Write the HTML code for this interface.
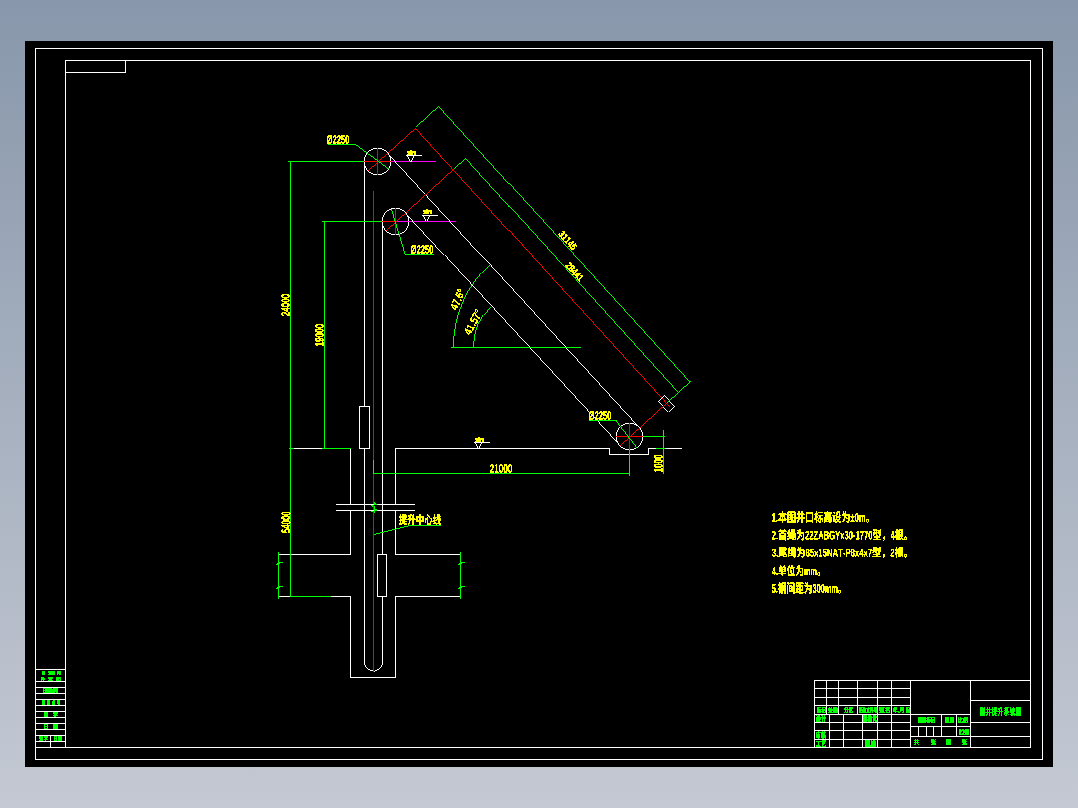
<!DOCTYPE html>
<html><head><meta charset="utf-8"><style>
html,body{margin:0;padding:0;width:1078px;height:808px;overflow:hidden;background:linear-gradient(#8897ab,#c4c9d3);font-family:"Liberation Sans",sans-serif;}
svg{position:absolute;left:0;top:0;display:block}
</style></head><body>
<svg width="1078" height="808" viewBox="0 0 1078 808" shape-rendering="crispEdges">
<rect x="25" y="41" width="1028" height="726" fill="#000"/>
<rect x="35" y="48" width="1008" height="1" fill="#ffffff"/>
<rect x="35" y="759" width="1008" height="1" fill="#ffffff"/>
<rect x="35" y="48" width="1" height="712" fill="#ffffff"/>
<rect x="1042" y="48" width="1" height="712" fill="#ffffff"/>
<rect x="65" y="60" width="966" height="1" fill="#ffffff"/>
<rect x="65" y="747" width="966" height="1" fill="#ffffff"/>
<rect x="65" y="60" width="1" height="688" fill="#ffffff"/>
<rect x="1030" y="60" width="1" height="688" fill="#ffffff"/>
<rect x="65" y="60" width="61" height="1" fill="#ffffff"/>
<rect x="65" y="72" width="61" height="1" fill="#ffffff"/>
<rect x="65" y="60" width="1" height="13" fill="#ffffff"/>
<rect x="125" y="60" width="1" height="13" fill="#ffffff"/>
<rect x="35" y="747" width="31" height="1" fill="#ffffff"/>
<rect x="35" y="669" width="31" height="1" fill="#ffffff"/>
<rect x="35" y="681" width="31" height="1" fill="#ffffff"/>
<rect x="35" y="687" width="31" height="1" fill="#ffffff"/>
<rect x="35" y="693" width="31" height="1" fill="#ffffff"/>
<rect x="35" y="699" width="31" height="1" fill="#ffffff"/>
<rect x="35" y="705" width="31" height="1" fill="#ffffff"/>
<rect x="35" y="711" width="31" height="1" fill="#ffffff"/>
<rect x="35" y="717" width="31" height="1" fill="#ffffff"/>
<rect x="35" y="723" width="31" height="1" fill="#ffffff"/>
<rect x="35" y="729" width="31" height="1" fill="#ffffff"/>
<rect x="35" y="735" width="31" height="1" fill="#ffffff"/>
<rect x="35" y="741" width="31" height="1" fill="#ffffff"/>
<rect x="50" y="735" width="1" height="13" fill="#ffffff"/>
<rect x="814" y="680" width="217" height="1" fill="#ffffff"/>
<rect x="814" y="680" width="1" height="68" fill="#ffffff"/>
<rect x="814" y="688" width="97" height="1" fill="#ffffff"/>
<rect x="814" y="697" width="97" height="1" fill="#ffffff"/>
<rect x="814" y="705" width="97" height="1" fill="#ffffff"/>
<rect x="814" y="714" width="97" height="1" fill="#ffffff"/>
<rect x="814" y="722" width="97" height="1" fill="#ffffff"/>
<rect x="814" y="730" width="97" height="1" fill="#ffffff"/>
<rect x="814" y="739" width="97" height="1" fill="#ffffff"/>
<rect x="826" y="680" width="1" height="35" fill="#ffffff"/>
<rect x="838" y="680" width="1" height="35" fill="#ffffff"/>
<rect x="857" y="680" width="1" height="35" fill="#ffffff"/>
<rect x="877" y="680" width="1" height="35" fill="#ffffff"/>
<rect x="891" y="680" width="1" height="35" fill="#ffffff"/>
<rect x="829" y="714" width="1" height="34" fill="#ffffff"/>
<rect x="843" y="714" width="1" height="34" fill="#ffffff"/>
<rect x="862" y="714" width="1" height="34" fill="#ffffff"/>
<rect x="877" y="714" width="1" height="34" fill="#ffffff"/>
<rect x="891" y="714" width="1" height="34" fill="#ffffff"/>
<rect x="910" y="680" width="1" height="68" fill="#ffffff"/>
<rect x="970" y="680" width="1" height="68" fill="#ffffff"/>
<rect x="910" y="714" width="61" height="1" fill="#ffffff"/>
<rect x="910" y="726" width="61" height="1" fill="#ffffff"/>
<rect x="910" y="736" width="61" height="1" fill="#ffffff"/>
<rect x="941" y="714" width="1" height="23" fill="#ffffff"/>
<rect x="956" y="714" width="1" height="23" fill="#ffffff"/>
<rect x="918" y="726" width="1" height="11" fill="#ffffff"/>
<rect x="926" y="726" width="1" height="11" fill="#ffffff"/>
<rect x="933" y="726" width="1" height="11" fill="#ffffff"/>
<rect x="970" y="700" width="61" height="1" fill="#ffffff"/>
<rect x="970" y="722" width="61" height="1" fill="#ffffff"/>
<rect x="970" y="736" width="61" height="1" fill="#ffffff"/>
<rect x="364" y="161" width="1" height="502" fill="#ffffff"/>
<rect x="382" y="221" width="1" height="442" fill="#ffffff"/>
<path d="M364.5,662 A9,9 0 0 0 382.5,662" fill="none" stroke="#ffffff" stroke-width="0.999"/>
<rect x="373" y="191" width="1" height="481" fill="#ff0000"/>
<rect x="359" y="406" width="11" height="43" fill="#000"/>
<rect x="359" y="406" width="11" height="1" fill="#ffffff"/>
<rect x="359" y="448" width="11" height="1" fill="#ffffff"/>
<rect x="359" y="406" width="1" height="43" fill="#ffffff"/>
<rect x="369" y="406" width="1" height="43" fill="#ffffff"/>
<rect x="290" y="448" width="61" height="1" fill="#ffffff"/>
<rect x="350" y="448" width="1" height="57" fill="#ffffff"/>
<rect x="395" y="448" width="215" height="1" fill="#ffffff"/>
<rect x="395" y="448" width="1" height="57" fill="#ffffff"/>
<rect x="322" y="448" width="29" height="1" fill="#00ff00"/>
<rect x="289" y="448" width="5" height="1" fill="#00ff00"/>
<rect x="350" y="510" width="1" height="45" fill="#ffffff"/>
<rect x="350" y="596" width="1" height="82" fill="#ffffff"/>
<rect x="395" y="510" width="1" height="45" fill="#ffffff"/>
<rect x="395" y="596" width="1" height="82" fill="#ffffff"/>
<rect x="350" y="677" width="46" height="1" fill="#ffffff"/>
<rect x="336" y="504" width="79" height="1" fill="#ffffff"/>
<rect x="336" y="510" width="79" height="1" fill="#ffffff"/>
<rect x="609" y="448" width="1" height="7" fill="#ffffff"/>
<rect x="609" y="454" width="40" height="1" fill="#ffffff"/>
<rect x="648" y="448" width="1" height="7" fill="#ffffff"/>
<rect x="648" y="448" width="34" height="1" fill="#ffffff"/>
<rect x="656" y="448" width="9" height="1" fill="#00ff00"/>
<rect x="278" y="554" width="73" height="1" fill="#ffffff"/>
<rect x="278" y="596" width="13" height="1" fill="#ffffff"/>
<rect x="290" y="596" width="41" height="1" fill="#00ff00"/>
<rect x="331" y="596" width="20" height="1" fill="#ffffff"/>
<rect x="395" y="554" width="66" height="1" fill="#ffffff"/>
<rect x="395" y="596" width="66" height="1" fill="#ffffff"/>
<rect x="377" y="554" width="10" height="43" fill="#000"/>
<rect x="377" y="554" width="10" height="1" fill="#ffffff"/>
<rect x="377" y="596" width="10" height="1" fill="#ffffff"/>
<rect x="377" y="554" width="1" height="43" fill="#ffffff"/>
<rect x="386" y="554" width="1" height="43" fill="#ffffff"/>
<rect x="278" y="552" width="1" height="47" fill="#00ff00"/>
<polyline points="278.5,560.0 278.5,562.0 281.5,562.5 276.0,564.5" fill="none" stroke="#00ff00" stroke-width="1" shape-rendering="crispEdges"/>
<rect x="276" y="564" width="3" height="1" fill="#00ff00"/>
<polyline points="278.5,584.0 278.5,586.0 281.5,586.5 276.0,588.5" fill="none" stroke="#00ff00" stroke-width="1" shape-rendering="crispEdges"/>
<rect x="276" y="588" width="3" height="1" fill="#00ff00"/>
<rect x="460" y="552" width="1" height="47" fill="#00ff00"/>
<polyline points="460.5,560.0 460.5,562.0 463.5,562.5 458.0,564.5" fill="none" stroke="#00ff00" stroke-width="1" shape-rendering="crispEdges"/>
<rect x="458" y="564" width="3" height="1" fill="#00ff00"/>
<polyline points="460.5,584.0 460.5,586.0 463.5,586.5 458.0,588.5" fill="none" stroke="#00ff00" stroke-width="1" shape-rendering="crispEdges"/>
<rect x="458" y="588" width="3" height="1" fill="#00ff00"/>
<rect x="290" y="161" width="1" height="436" fill="#00ff00"/>
<rect x="288" y="161" width="77" height="1" fill="#00ff00"/>
<rect x="324" y="221" width="1" height="228" fill="#00ff00"/>
<rect x="322" y="221" width="61" height="1" fill="#00ff00"/>
<rect x="373" y="460" width="1" height="14" fill="#00ff00"/>
<rect x="373" y="473" width="257" height="1" fill="#00ff00"/>
<rect x="629" y="449" width="1" height="27" fill="#00ff00"/>
<rect x="663" y="430" width="1" height="44" fill="#00ff00"/>
<rect x="642" y="436" width="23" height="1" fill="#00ff00"/>
<rect x="374" y="502" width="1" height="1" fill="#00ff00"/>
<rect x="374" y="503" width="1" height="1" fill="#00ff00"/>
<rect x="375" y="503" width="1" height="1" fill="#00ff00"/>
<rect x="374" y="504" width="1" height="1" fill="#00ff00"/>
<rect x="375" y="504" width="1" height="1" fill="#00ff00"/>
<rect x="376" y="504" width="1" height="1" fill="#00ff00"/>
<rect x="371" y="505" width="1" height="1" fill="#00ff00"/>
<rect x="372" y="505" width="1" height="1" fill="#00ff00"/>
<rect x="372" y="506" width="1" height="1" fill="#00ff00"/>
<rect x="375" y="509" width="1" height="1" fill="#00ff00"/>
<rect x="376" y="509" width="1" height="1" fill="#00ff00"/>
<rect x="375" y="510" width="1" height="1" fill="#00ff00"/>
<rect x="376" y="510" width="1" height="1" fill="#00ff00"/>
<rect x="371" y="511" width="1" height="1" fill="#00ff00"/>
<rect x="372" y="511" width="1" height="1" fill="#00ff00"/>
<rect x="374" y="506" width="1" height="7" fill="#00ff00"/>
<polygon points="390.80,161.50 390.64,163.58 390.15,165.61 389.35,167.54 388.26,169.32 386.90,170.90 385.32,172.26 383.54,173.35 381.61,174.15 379.58,174.64 377.50,174.80 375.42,174.64 373.39,174.15 371.46,173.35 369.68,172.26 368.10,170.90 366.74,169.32 365.65,167.54 364.85,165.61 364.36,163.58 364.20,161.50 364.36,159.42 364.85,157.39 365.65,155.46 366.74,153.68 368.10,152.10 369.68,150.74 371.46,149.65 373.39,148.85 375.42,148.36 377.50,148.20 379.58,148.36 381.61,148.85 383.54,149.65 385.32,150.74 386.90,152.10 388.26,153.68 389.35,155.46 390.15,157.39 390.64,159.42" fill="none" stroke="#ffffff" stroke-width="0.999"/>
<rect x="377" y="148" width="1" height="27" fill="#ff0000"/>
<polygon points="408.80,221.50 408.64,223.58 408.15,225.61 407.35,227.54 406.26,229.32 404.90,230.90 403.32,232.26 401.54,233.35 399.61,234.15 397.58,234.64 395.50,234.80 393.42,234.64 391.39,234.15 389.46,233.35 387.68,232.26 386.10,230.90 384.74,229.32 383.65,227.54 382.85,225.61 382.36,223.58 382.20,221.50 382.36,219.42 382.85,217.39 383.65,215.46 384.74,213.68 386.10,212.10 387.68,210.74 389.46,209.65 391.39,208.85 393.42,208.36 395.50,208.20 397.58,208.36 399.61,208.85 401.54,209.65 403.32,210.74 404.90,212.10 406.26,213.68 407.35,215.46 408.15,217.39 408.64,219.42" fill="none" stroke="#ffffff" stroke-width="0.999"/>
<rect x="395" y="208" width="1" height="27" fill="#ff0000"/>
<polygon points="642.80,436.50 642.64,438.58 642.15,440.61 641.35,442.54 640.26,444.32 638.90,445.90 637.32,447.26 635.54,448.35 633.61,449.15 631.58,449.64 629.50,449.80 627.42,449.64 625.39,449.15 623.46,448.35 621.68,447.26 620.10,445.90 618.74,444.32 617.65,442.54 616.85,440.61 616.36,438.58 616.20,436.50 616.36,434.42 616.85,432.39 617.65,430.46 618.74,428.68 620.10,427.10 621.68,425.74 623.46,424.65 625.39,423.85 627.42,423.36 629.50,423.20 631.58,423.36 633.61,423.85 635.54,424.65 637.32,425.74 638.90,427.10 640.26,428.68 641.35,430.46 642.15,432.39 642.64,434.42" fill="none" stroke="#ffffff" stroke-width="0.999"/>
<rect x="629" y="423" width="1" height="27" fill="#ff0000"/>
<rect x="364" y="161" width="27" height="1" fill="#ff0000"/>
<rect x="382" y="221" width="14" height="1" fill="#ff0000"/>
<rect x="616" y="436" width="27" height="1" fill="#ff0000"/>
<rect x="391" y="161" width="45" height="1" fill="#ff00ff"/>
<rect x="396" y="221" width="60" height="1" fill="#ff00ff"/>
<line x1="390.50" y1="155.50" x2="636.50" y2="424.50" stroke="#ffffff" stroke-width="0.999"/>
<line x1="406.50" y1="213.50" x2="616.50" y2="441.50" stroke="#ffffff" stroke-width="0.999"/>
<line x1="658.50" y1="400.50" x2="664.50" y2="394.50" stroke="#ffffff" stroke-width="0.999"/>
<line x1="664.50" y1="394.50" x2="674.50" y2="405.50" stroke="#ffffff" stroke-width="0.999"/>
<line x1="674.50" y1="405.50" x2="668.50" y2="411.50" stroke="#ffffff" stroke-width="0.999"/>
<line x1="668.50" y1="411.50" x2="658.50" y2="400.50" stroke="#ffffff" stroke-width="0.999"/>
<line x1="367.50" y1="170.50" x2="415.50" y2="127.50" stroke="#ff0000" stroke-width="0.999"/>
<line x1="415.50" y1="127.50" x2="669.50" y2="406.50" stroke="#ff0000" stroke-width="0.999"/>
<line x1="385.50" y1="230.50" x2="453.50" y2="168.50" stroke="#ff0000" stroke-width="0.999"/>
<line x1="619.50" y1="445.50" x2="666.50" y2="402.50" stroke="#ff0000" stroke-width="0.999"/>
<line x1="415.50" y1="126.50" x2="438.50" y2="105.50" stroke="#00ff00" stroke-width="0.999"/>
<line x1="438.50" y1="105.50" x2="689.50" y2="381.50" stroke="#00ff00" stroke-width="0.999"/>
<line x1="453.50" y1="168.50" x2="465.50" y2="157.50" stroke="#00ff00" stroke-width="0.999"/>
<line x1="465.50" y1="157.50" x2="677.50" y2="391.50" stroke="#00ff00" stroke-width="0.999"/>
<line x1="666.50" y1="402.50" x2="690.50" y2="380.50" stroke="#00ff00" stroke-width="0.999"/>
<polyline points="327.50,144.50 354.50,144.50 388.50,169.50" fill="none" stroke="#00ff00" stroke-width="0.999"/>
<polyline points="433.50,254.50 405.50,254.50 391.50,208.50" fill="none" stroke="#00ff00" stroke-width="0.999"/>
<polyline points="588.50,420.50 616.50,420.50 637.50,447.50" fill="none" stroke="#00ff00" stroke-width="0.999"/>
<polyline points="373.50,534.50 408.50,525.50 440.50,525.50" fill="none" stroke="#00ff00" stroke-width="0.999"/>
<rect x="406" y="155" width="16" height="1" fill="#ffffff"/>
<polyline points="407.50,155.50 410.50,161.50 413.50,155.50" fill="none" stroke="#ffffff" stroke-width="0.999"/>
<path fill="#ffff00" d="M410 150h2v1h-2zM407 151h9v1h-9zM407 152h9v1h-9zM408 153h5v1h-5zM414 153h2v1h-2zM407 154h6v1h-6zM414 154h2v1h-2z"/>
<rect x="422" y="215" width="16" height="1" fill="#ffffff"/>
<polyline points="423.50,215.50 426.50,220.50 429.50,215.50" fill="none" stroke="#ffffff" stroke-width="0.999"/>
<path fill="#ffff00" d="M426 209h2v1h-2zM423 210h9v1h-9zM423 211h9v1h-9zM424 212h5v1h-5zM430 212h2v1h-2zM423 213h6v1h-6zM430 213h2v1h-2z"/>
<rect x="474" y="442" width="16" height="1" fill="#ffffff"/>
<polyline points="475.50,442.50 478.50,447.50 481.50,442.50" fill="none" stroke="#ffffff" stroke-width="0.999"/>
<path fill="#ffff00" d="M478 437h2v1h-2zM475 438h9v1h-9zM475 439h9v1h-9zM476 440h5v1h-5zM482 440h2v1h-2zM475 441h6v1h-6zM482 441h2v1h-2z"/>
<rect x="451" y="347" width="130" height="1" fill="#00ff00"/>
<path d="M453.50,347.50 A111.30,111.30 0 0 1 489.50,264.50" fill="none" stroke="#00ff00" stroke-width="0.999"/>
<path d="M473.50,347.50 A55.60,55.60 0 0 1 490.50,306.50" fill="none" stroke="#00ff00" stroke-width="0.999"/>
<path fill="#ffff00" d="M328 135h4v1h-4zM334 135h2v1h-2zM338 135h2v1h-2zM341 135h4v1h-4zM346 135h2v1h-2zM327 136h5v1h-5zM333 136h3v1h-3zM337 136h8v1h-8zM346 136h3v1h-3zM327 137h2v1h-2zM330 137h2v1h-2zM333 137h1v1h-1zM335 137h3v1h-3zM339 137h4v1h-4zM345 137h2v1h-2zM348 137h1v1h-1zM327 138h1v1h-1zM329 138h3v1h-3zM335 138h1v1h-1zM339 138h5v1h-5zM345 138h2v1h-2zM348 138h1v1h-1zM327 139h1v1h-1zM329 139h1v1h-1zM331 139h1v1h-1zM334 139h2v1h-2zM338 139h2v1h-2zM341 139h6v1h-6zM348 139h1v1h-1zM327 140h3v1h-3zM331 140h1v1h-1zM334 140h1v1h-1zM338 140h2v1h-2zM344 140h3v1h-3zM348 140h1v1h-1zM327 141h2v1h-2zM331 141h1v1h-1zM333 141h2v1h-2zM337 141h2v1h-2zM341 141h1v1h-1zM344 141h3v1h-3zM348 141h1v1h-1zM327 142h5v1h-5zM333 142h12v1h-12zM346 142h3v1h-3zM327 143h4v1h-4zM333 143h3v1h-3zM337 143h4v1h-4zM342 143h2v1h-2zM346 143h2v1h-2z"/>
<path fill="#ffff00" d="M412 245h4v1h-4zM418 245h2v1h-2zM422 245h2v1h-2zM425 245h4v1h-4zM430 245h2v1h-2zM411 246h5v1h-5zM417 246h3v1h-3zM421 246h8v1h-8zM430 246h3v1h-3zM411 247h2v1h-2zM414 247h2v1h-2zM417 247h1v1h-1zM419 247h3v1h-3zM423 247h4v1h-4zM429 247h2v1h-2zM432 247h1v1h-1zM411 248h1v1h-1zM413 248h3v1h-3zM419 248h1v1h-1zM423 248h5v1h-5zM429 248h2v1h-2zM432 248h1v1h-1zM411 249h1v1h-1zM413 249h1v1h-1zM415 249h1v1h-1zM418 249h2v1h-2zM422 249h2v1h-2zM425 249h6v1h-6zM432 249h1v1h-1zM411 250h3v1h-3zM415 250h1v1h-1zM418 250h1v1h-1zM422 250h2v1h-2zM428 250h3v1h-3zM432 250h1v1h-1zM411 251h2v1h-2zM415 251h1v1h-1zM417 251h2v1h-2zM421 251h2v1h-2zM425 251h1v1h-1zM428 251h3v1h-3zM432 251h1v1h-1zM411 252h5v1h-5zM417 252h12v1h-12zM430 252h3v1h-3zM411 253h4v1h-4zM417 253h3v1h-3zM421 253h4v1h-4zM426 253h2v1h-2zM430 253h2v1h-2z"/>
<path fill="#ffff00" d="M590 411h4v1h-4zM596 411h2v1h-2zM600 411h2v1h-2zM603 411h4v1h-4zM608 411h2v1h-2zM589 412h5v1h-5zM595 412h3v1h-3zM599 412h8v1h-8zM608 412h3v1h-3zM589 413h2v1h-2zM592 413h2v1h-2zM595 413h1v1h-1zM597 413h3v1h-3zM601 413h4v1h-4zM607 413h2v1h-2zM610 413h1v1h-1zM589 414h1v1h-1zM591 414h3v1h-3zM597 414h1v1h-1zM601 414h5v1h-5zM607 414h2v1h-2zM610 414h1v1h-1zM589 415h1v1h-1zM591 415h1v1h-1zM593 415h1v1h-1zM596 415h2v1h-2zM600 415h2v1h-2zM603 415h6v1h-6zM610 415h1v1h-1zM589 416h3v1h-3zM593 416h1v1h-1zM596 416h1v1h-1zM600 416h2v1h-2zM606 416h3v1h-3zM610 416h1v1h-1zM589 417h2v1h-2zM593 417h1v1h-1zM595 417h2v1h-2zM599 417h2v1h-2zM603 417h1v1h-1zM606 417h3v1h-3zM610 417h1v1h-1zM589 418h5v1h-5zM595 418h12v1h-12zM608 418h3v1h-3zM589 419h4v1h-4zM595 419h3v1h-3zM599 419h4v1h-4zM604 419h2v1h-2zM608 419h2v1h-2z"/>
<path fill="#ffff00" d="M282 294h7v1h-7zM281 295h3v1h-3zM287 295h3v1h-3zM281 296h2v1h-2zM288 296h2v1h-2zM282 297h7v1h-7zM284 298h3v1h-3zM282 299h7v1h-7zM281 300h2v1h-2zM288 300h2v1h-2zM282 301h7v1h-7zM284 302h3v1h-3zM282 303h7v1h-7zM281 304h3v1h-3zM287 304h3v1h-3zM281 305h3v1h-3zM287 305h3v1h-3zM282 306h7v1h-7zM287 307h1v1h-1zM281 308h9v1h-9zM282 309h3v1h-3zM286 309h2v1h-2zM284 310h4v1h-4zM286 311h2v1h-2zM282 312h4v1h-4zM288 312h2v1h-2zM281 313h2v1h-2zM284 313h3v1h-3zM288 313h2v1h-2zM281 314h2v1h-2zM286 314h4v1h-4zM282 315h2v1h-2zM287 315h3v1h-3z"/>
<path fill="#ffff00" d="M316 324h7v1h-7zM315 325h3v1h-3zM321 325h3v1h-3zM315 326h2v1h-2zM322 326h2v1h-2zM316 327h7v1h-7zM318 328h3v1h-3zM315 329h8v1h-8zM315 330h2v1h-2zM322 330h2v1h-2zM315 331h8v1h-8zM317 332h5v1h-5zM316 333h7v1h-7zM315 334h9v1h-9zM315 335h2v1h-2zM322 335h2v1h-2zM316 336h7v1h-7zM318 337h2v1h-2zM315 338h8v1h-8zM315 339h2v1h-2zM319 339h2v1h-2zM322 339h2v1h-2zM315 340h9v1h-9zM316 341h4v1h-4zM322 341h1v1h-1zM322 342h2v1h-2zM315 343h9v1h-9zM315 344h9v1h-9zM316 345h2v1h-2zM322 345h2v1h-2z"/>
<path fill="#ffff00" d="M282 512h8v1h-8zM281 513h2v1h-2zM289 513h2v1h-2zM282 514h8v1h-8zM284 515h4v1h-4zM282 516h8v1h-8zM281 517h3v1h-3zM288 517h2v1h-2zM281 518h4v1h-4zM287 518h3v1h-3zM283 519h6v1h-6zM283 520h6v1h-6zM282 521h8v1h-8zM281 522h2v1h-2zM289 522h2v1h-2zM282 523h8v1h-8zM287 524h1v1h-1zM281 525h9v1h-9zM282 526h3v1h-3zM287 526h2v1h-2zM284 527h5v1h-5zM286 528h3v1h-3zM282 529h1v1h-1zM285 529h5v1h-5zM281 530h2v1h-2zM284 530h2v1h-2zM288 530h2v1h-2zM281 531h5v1h-5zM288 531h2v1h-2zM282 532h5v1h-5zM288 532h2v1h-2z"/>
<path fill="#ffff00" d="M491 464h2v1h-2zM496 464h1v1h-1zM500 464h2v1h-2zM504 464h3v1h-3zM509 464h2v1h-2zM490 465h4v1h-4zM495 465h2v1h-2zM499 465h4v1h-4zM504 465h3v1h-3zM508 465h4v1h-4zM490 466h1v1h-1zM492 466h2v1h-2zM496 466h1v1h-1zM499 466h1v1h-1zM502 466h1v1h-1zM504 466h1v1h-1zM506 466h4v1h-4zM511 466h1v1h-1zM492 467h2v1h-2zM496 467h1v1h-1zM499 467h1v1h-1zM502 467h3v1h-3zM506 467h3v1h-3zM511 467h1v1h-1zM492 468h1v1h-1zM496 468h1v1h-1zM499 468h1v1h-1zM502 468h3v1h-3zM506 468h3v1h-3zM511 468h1v1h-1zM491 469h2v1h-2zM496 469h1v1h-1zM499 469h1v1h-1zM502 469h3v1h-3zM506 469h3v1h-3zM511 469h1v1h-1zM490 470h2v1h-2zM496 470h1v1h-1zM499 470h2v1h-2zM502 470h1v1h-1zM504 470h1v1h-1zM506 470h4v1h-4zM511 470h1v1h-1zM490 471h4v1h-4zM495 471h3v1h-3zM499 471h4v1h-4zM504 471h3v1h-3zM508 471h4v1h-4zM490 472h4v1h-4zM495 472h4v1h-4zM500 472h2v1h-2zM504 472h3v1h-3zM509 472h2v1h-2z"/>
<path fill="#ffff00" d="M654 455h8v1h-8zM654 456h2v1h-2zM661 456h2v1h-2zM654 457h9v1h-9zM655 458h6v1h-6zM655 459h6v1h-6zM654 460h9v1h-9zM654 461h2v1h-2zM661 461h2v1h-2zM654 462h8v1h-8zM658 463h1v1h-1zM654 464h8v1h-8zM654 465h2v1h-2zM661 465h2v1h-2zM654 466h9v1h-9zM655 467h6v1h-6zM661 468h2v1h-2zM654 469h9v1h-9zM654 470h9v1h-9zM655 471h1v1h-1zM661 471h2v1h-2z"/>
<path fill="#ffff00" d="M562 231h3v1h-3zM563 232h2v1h-2zM559 233h1v1h-1zM561 233h4v1h-4zM558 234h2v1h-2zM561 234h3v1h-3zM565 234h2v1h-2zM559 235h4v1h-4zM565 235h3v1h-3zM559 236h3v1h-3zM565 236h2v1h-2zM561 237h1v1h-1zM563 237h3v1h-3zM568 237h2v1h-2zM561 238h4v1h-4zM568 238h3v1h-3zM562 239h2v1h-2zM568 239h2v1h-2zM563 240h1v1h-1zM567 240h2v1h-2zM564 241h4v1h-4zM572 241h2v1h-2zM565 242h2v1h-2zM569 242h5v1h-5zM566 243h1v1h-1zM568 243h2v1h-2zM571 243h2v1h-2zM575 243h1v1h-1zM568 244h4v1h-4zM573 244h3v1h-3zM569 245h2v1h-2zM572 245h5v1h-5zM568 246h3v1h-3zM572 246h3v1h-3zM576 246h1v1h-1zM570 247h2v1h-2zM574 247h1v1h-1zM570 248h5v1h-5zM571 249h3v1h-3z"/>
<path fill="#ffff00" d="M569 262h2v1h-2zM569 263h3v1h-3zM570 264h2v1h-2zM565 265h9v1h-9zM565 266h3v1h-3zM571 266h4v1h-4zM566 267h2v1h-2zM570 267h2v1h-2zM573 267h2v1h-2zM567 268h8v1h-8zM568 269h2v1h-2zM571 269h2v1h-2zM576 269h2v1h-2zM569 270h9v1h-9zM570 271h4v1h-4zM575 271h2v1h-2zM572 272h4v1h-4zM573 273h2v1h-2zM576 273h5v1h-5zM572 274h8v1h-8zM575 275h4v1h-4zM580 275h3v1h-3zM576 276h2v1h-2zM581 276h2v1h-2zM575 277h3v1h-3zM580 277h2v1h-2zM577 278h1v1h-1zM579 278h2v1h-2zM577 279h3v1h-3zM578 280h2v1h-2zM579 281h1v1h-1z"/>
<path fill="#ffff00" d="M457 289h4v1h-4zM457 290h2v1h-2zM460 290h1v1h-1zM458 291h3v1h-3zM456 292h2v1h-2zM456 293h2v1h-2zM459 293h2v1h-2zM455 294h2v1h-2zM458 294h5v1h-5zM456 295h4v1h-4zM462 295h1v1h-1zM457 296h3v1h-3zM461 296h2v1h-2zM458 297h5v1h-5zM453 299h2v1h-2zM460 299h1v1h-1zM453 300h3v1h-3zM460 300h2v1h-2zM452 301h2v1h-2zM455 301h2v1h-2zM452 302h1v1h-1zM456 302h2v1h-2zM457 303h3v1h-3zM451 304h2v1h-2zM458 304h2v1h-2zM451 305h6v1h-6zM452 306h1v1h-1zM454 306h4v1h-4zM452 307h2v1h-2zM455 307h3v1h-3zM453 308h3v1h-3zM454 309h2v1h-2z"/>
<path fill="#ffff00" d="M475 309h2v1h-2zM475 310h1v1h-1zM477 310h1v1h-1zM475 311h1v1h-1zM477 311h1v1h-1zM474 312h1v1h-1zM476 312h1v1h-1zM473 313h3v1h-3zM472 314h2v1h-2zM475 314h1v1h-1zM472 315h2v1h-2zM475 315h2v1h-2zM472 316h1v1h-1zM476 316h2v1h-2zM471 317h1v1h-1zM477 317h3v1h-3zM470 318h2v1h-2zM474 318h1v1h-1zM478 318h2v1h-2zM470 319h2v1h-2zM473 319h4v1h-4zM470 320h4v1h-4zM476 320h2v1h-2zM471 321h3v1h-3zM476 321h2v1h-2zM475 322h3v1h-3zM475 323h2v1h-2zM474 324h1v1h-1zM467 325h2v1h-2zM474 325h2v1h-2zM467 326h4v1h-4zM467 327h1v1h-1zM470 327h5v1h-5zM465 328h1v1h-1zM472 328h2v1h-2zM465 329h3v1h-3zM472 329h2v1h-2zM465 330h6v1h-6zM472 330h1v1h-1zM466 331h1v1h-1zM468 331h4v1h-4zM466 332h2v1h-2zM469 332h3v1h-3zM467 333h3v1h-3zM468 334h1v1h-1z"/>
<path fill="#ffff00" d="M400 514h1v1h-1zM402 514h4v1h-4zM410 514h2v1h-2zM413 514h1v1h-1zM419 514h2v1h-2zM427 514h1v1h-1zM434 514h1v1h-1zM437 514h3v1h-3zM400 515h1v1h-1zM402 515h5v1h-5zM408 515h6v1h-6zM419 515h2v1h-2zM427 515h2v1h-2zM434 515h1v1h-1zM437 515h3v1h-3zM399 516h8v1h-8zM408 516h3v1h-3zM412 516h2v1h-2zM416 516h8v1h-8zM428 516h2v1h-2zM434 516h1v1h-1zM437 516h4v1h-4zM399 517h8v1h-8zM409 517h2v1h-2zM412 517h2v1h-2zM416 517h8v1h-8zM427 517h1v1h-1zM429 517h1v1h-1zM433 517h7v1h-7zM400 518h1v1h-1zM402 518h4v1h-4zM408 518h7v1h-7zM416 518h2v1h-2zM419 518h2v1h-2zM422 518h2v1h-2zM425 518h3v1h-3zM430 518h2v1h-2zM433 518h3v1h-3zM437 518h4v1h-4zM400 519h18v1h-18zM419 519h2v1h-2zM422 519h2v1h-2zM425 519h3v1h-3zM431 519h1v1h-1zM434 519h1v1h-1zM436 519h5v1h-5zM399 520h6v1h-6zM409 520h2v1h-2zM412 520h2v1h-2zM416 520h8v1h-8zM425 520h1v1h-1zM427 520h1v1h-1zM431 520h1v1h-1zM433 520h4v1h-4zM438 520h3v1h-3zM400 521h1v1h-1zM402 521h5v1h-5zM409 521h1v1h-1zM412 521h2v1h-2zM416 521h8v1h-8zM425 521h1v1h-1zM427 521h1v1h-1zM430 521h5v1h-5zM438 521h2v1h-2zM400 522h1v1h-1zM402 522h3v1h-3zM409 522h1v1h-1zM412 522h2v1h-2zM419 522h2v1h-2zM425 522h1v1h-1zM427 522h1v1h-1zM430 522h1v1h-1zM434 522h2v1h-2zM438 522h2v1h-2zM399 523h8v1h-8zM408 523h2v1h-2zM412 523h2v1h-2zM419 523h2v1h-2zM427 523h4v1h-4zM433 523h8v1h-8zM399 524h3v1h-3zM404 524h3v1h-3zM408 524h1v1h-1zM412 524h2v1h-2zM419 524h2v1h-2zM427 524h4v1h-4zM436 524h1v1h-1zM439 524h2v1h-2z"/>
<path fill="#ffff00" d="M782 511h1v1h-1zM788 511h7v1h-7zM798 511h2v1h-2zM801 511h2v1h-2zM816 511h1v1h-1zM827 511h1v1h-1zM837 511h3v1h-3zM843 511h1v1h-1zM845 511h1v1h-1zM782 512h1v1h-1zM787 512h9v1h-9zM798 512h2v1h-2zM801 512h2v1h-2zM806 512h7v1h-7zM816 512h1v1h-1zM818 512h5v1h-5zM824 512h8v1h-8zM833 512h2v1h-2zM836 512h4v1h-4zM843 512h1v1h-1zM845 512h1v1h-1zM773 513h2v1h-2zM779 513h7v1h-7zM787 513h2v1h-2zM790 513h2v1h-2zM794 513h2v1h-2zM797 513h7v1h-7zM806 513h7v1h-7zM815 513h3v1h-3zM824 513h8v1h-8zM834 513h1v1h-1zM836 513h2v1h-2zM839 513h1v1h-1zM843 513h3v1h-3zM856 513h2v1h-2zM772 514h3v1h-3zM778 514h18v1h-18zM797 514h8v1h-8zM806 514h1v1h-1zM812 514h1v1h-1zM814 514h4v1h-4zM825 514h6v1h-6zM836 514h2v1h-2zM839 514h1v1h-1zM842 514h8v1h-8zM852 514h1v1h-1zM855 514h3v1h-3zM772 515h3v1h-3zM780 515h5v1h-5zM787 515h6v1h-6zM794 515h2v1h-2zM798 515h2v1h-2zM801 515h2v1h-2zM806 515h1v1h-1zM812 515h1v1h-1zM815 515h2v1h-2zM818 515h5v1h-5zM825 515h6v1h-6zM832 515h5v1h-5zM839 515h2v1h-2zM842 515h8v1h-8zM852 515h1v1h-1zM855 515h1v1h-1zM857 515h8v1h-8zM773 516h2v1h-2zM780 516h5v1h-5zM787 516h2v1h-2zM790 516h3v1h-3zM794 516h2v1h-2zM798 516h2v1h-2zM801 516h2v1h-2zM806 516h1v1h-1zM812 516h1v1h-1zM815 516h3v1h-3zM819 516h2v1h-2zM825 516h6v1h-6zM833 516h2v1h-2zM836 516h4v1h-4zM844 516h2v1h-2zM848 516h8v1h-8zM857 516h8v1h-8zM773 517h2v1h-2zM780 517h1v1h-1zM782 517h1v1h-1zM784 517h1v1h-1zM787 517h18v1h-18zM806 517h1v1h-1zM812 517h1v1h-1zM815 517h3v1h-3zM819 517h2v1h-2zM824 517h8v1h-8zM833 517h2v1h-2zM836 517h5v1h-5zM844 517h3v1h-3zM848 517h2v1h-2zM851 517h3v1h-3zM855 517h1v1h-1zM857 517h4v1h-4zM862 517h1v1h-1zM864 517h1v1h-1zM773 518h2v1h-2zM779 518h2v1h-2zM782 518h1v1h-1zM784 518h2v1h-2zM787 518h2v1h-2zM790 518h3v1h-3zM794 518h11v1h-11zM806 518h1v1h-1zM812 518h1v1h-1zM814 518h3v1h-3zM818 518h5v1h-5zM824 518h8v1h-8zM833 518h2v1h-2zM836 518h1v1h-1zM839 518h1v1h-1zM844 518h1v1h-1zM846 518h4v1h-4zM852 518h1v1h-1zM855 518h1v1h-1zM857 518h4v1h-4zM862 518h1v1h-1zM864 518h1v1h-1zM773 519h2v1h-2zM778 519h15v1h-15zM794 519h2v1h-2zM798 519h2v1h-2zM801 519h2v1h-2zM806 519h1v1h-1zM812 519h1v1h-1zM814 519h3v1h-3zM818 519h1v1h-1zM820 519h3v1h-3zM824 519h8v1h-8zM833 519h7v1h-7zM843 519h2v1h-2zM848 519h2v1h-2zM852 519h1v1h-1zM855 519h1v1h-1zM857 519h4v1h-4zM862 519h1v1h-1zM864 519h1v1h-1zM866 519h3v1h-3zM772 520h3v1h-3zM776 520h10v1h-10zM787 520h2v1h-2zM791 520h5v1h-5zM797 520h2v1h-2zM801 520h2v1h-2zM806 520h7v1h-7zM816 520h3v1h-3zM820 520h1v1h-1zM822 520h1v1h-1zM824 520h3v1h-3zM828 520h4v1h-4zM833 520h3v1h-3zM837 520h2v1h-2zM843 520h2v1h-2zM848 520h2v1h-2zM851 520h3v1h-3zM855 520h3v1h-3zM859 520h2v1h-2zM862 520h1v1h-1zM864 520h1v1h-1zM866 520h1v1h-1zM868 520h1v1h-1zM772 521h5v1h-5zM782 521h1v1h-1zM787 521h9v1h-9zM797 521h2v1h-2zM801 521h2v1h-2zM806 521h7v1h-7zM816 521h1v1h-1zM818 521h3v1h-3zM822 521h1v1h-1zM824 521h8v1h-8zM833 521h8v1h-8zM842 521h2v1h-2zM846 521h3v1h-3zM850 521h5v1h-5zM856 521h2v1h-2zM859 521h2v1h-2zM862 521h1v1h-1zM864 521h1v1h-1zM866 521h1v1h-1zM868 521h1v1h-1zM782 522h1v1h-1zM787 522h9v1h-9zM797 522h1v1h-1zM801 522h2v1h-2zM806 522h1v1h-1zM812 522h1v1h-1zM816 522h1v1h-1zM819 522h2v1h-2zM824 522h1v1h-1zM829 522h2v1h-2zM835 522h2v1h-2zM839 522h2v1h-2zM847 522h2v1h-2zM867 522h1v1h-1z"/>
<path fill="#ffff00" d="M780 529h1v1h-1zM784 529h1v1h-1zM789 529h1v1h-1zM791 529h4v1h-4zM799 529h2v1h-2zM873 529h4v1h-4zM880 529h1v1h-1zM896 529h2v1h-2zM899 529h4v1h-4zM779 530h7v1h-7zM788 530h2v1h-2zM791 530h4v1h-4zM797 530h4v1h-4zM873 530h8v1h-8zM896 530h7v1h-7zM772 531h3v1h-3zM778 531h9v1h-9zM788 531h2v1h-2zM791 531h4v1h-4zM798 531h3v1h-3zM806 531h3v1h-3zM810 531h3v1h-3zM814 531h4v1h-4zM820 531h2v1h-2zM824 531h4v1h-4zM830 531h4v1h-4zM835 531h2v1h-2zM839 531h1v1h-1zM845 531h3v1h-3zM850 531h2v1h-2zM857 531h2v1h-2zM860 531h8v1h-8zM869 531h3v1h-3zM874 531h1v1h-1zM876 531h1v1h-1zM878 531h3v1h-3zM892 531h2v1h-2zM895 531h5v1h-5zM901 531h2v1h-2zM772 532h4v1h-4zM781 532h3v1h-3zM787 532h8v1h-8zM797 532h7v1h-7zM805 532h4v1h-4zM810 532h3v1h-3zM814 532h4v1h-4zM820 532h2v1h-2zM824 532h5v1h-5zM830 532h5v1h-5zM836 532h1v1h-1zM838 532h2v1h-2zM845 532h3v1h-3zM849 532h4v1h-4zM856 532h3v1h-3zM860 532h4v1h-4zM865 532h3v1h-3zM869 532h3v1h-3zM873 532h8v1h-8zM892 532h2v1h-2zM895 532h8v1h-8zM774 533h2v1h-2zM779 533h7v1h-7zM787 533h9v1h-9zM797 533h7v1h-7zM808 533h1v1h-1zM812 533h1v1h-1zM816 533h1v1h-1zM820 533h2v1h-2zM824 533h1v1h-1zM827 533h4v1h-4zM836 533h3v1h-3zM840 533h2v1h-2zM843 533h1v1h-1zM847 533h1v1h-1zM849 533h1v1h-1zM851 533h2v1h-2zM857 533h2v1h-2zM862 533h1v1h-1zM866 533h4v1h-4zM871 533h1v1h-1zM873 533h4v1h-4zM878 533h3v1h-3zM892 533h2v1h-2zM896 533h4v1h-4zM901 533h2v1h-2zM774 534h2v1h-2zM779 534h2v1h-2zM784 534h2v1h-2zM788 534h8v1h-8zM799 534h2v1h-2zM803 534h1v1h-1zM807 534h2v1h-2zM811 534h2v1h-2zM815 534h2v1h-2zM819 534h4v1h-4zM824 534h4v1h-4zM829 534h2v1h-2zM836 534h3v1h-3zM841 534h3v1h-3zM846 534h2v1h-2zM849 534h1v1h-1zM851 534h2v1h-2zM857 534h2v1h-2zM862 534h1v1h-1zM866 534h1v1h-1zM868 534h2v1h-2zM871 534h1v1h-1zM873 534h2v1h-2zM876 534h1v1h-1zM879 534h2v1h-2zM891 534h3v1h-3zM896 534h7v1h-7zM773 535h2v1h-2zM779 535h7v1h-7zM788 535h8v1h-8zM799 535h3v1h-3zM803 535h1v1h-1zM807 535h1v1h-1zM811 535h2v1h-2zM815 535h1v1h-1zM819 535h4v1h-4zM824 535h7v1h-7zM832 535h3v1h-3zM837 535h2v1h-2zM841 535h2v1h-2zM846 535h2v1h-2zM849 535h1v1h-1zM851 535h4v1h-4zM857 535h2v1h-2zM861 535h2v1h-2zM866 535h1v1h-1zM868 535h2v1h-2zM871 535h1v1h-1zM873 535h1v1h-1zM876 535h2v1h-2zM879 535h2v1h-2zM891 535h1v1h-1zM893 535h1v1h-1zM895 535h8v1h-8zM773 536h1v1h-1zM779 536h7v1h-7zM787 536h9v1h-9zM798 536h2v1h-2zM801 536h1v1h-1zM803 536h1v1h-1zM806 536h2v1h-2zM810 536h2v1h-2zM814 536h2v1h-2zM819 536h4v1h-4zM824 536h1v1h-1zM827 536h4v1h-4zM833 536h2v1h-2zM837 536h1v1h-1zM841 536h2v1h-2zM847 536h3v1h-3zM851 536h4v1h-4zM857 536h2v1h-2zM861 536h1v1h-1zM865 536h2v1h-2zM868 536h2v1h-2zM871 536h1v1h-1zM874 536h6v1h-6zM884 536h1v1h-1zM891 536h12v1h-12zM905 536h1v1h-1zM772 537h2v1h-2zM779 537h7v1h-7zM789 537h7v1h-7zM798 537h2v1h-2zM803 537h1v1h-1zM805 537h2v1h-2zM810 537h1v1h-1zM814 537h1v1h-1zM819 537h1v1h-1zM822 537h1v1h-1zM824 537h1v1h-1zM827 537h2v1h-2zM830 537h1v1h-1zM833 537h2v1h-2zM837 537h1v1h-1zM841 537h3v1h-3zM845 537h1v1h-1zM847 537h3v1h-3zM851 537h2v1h-2zM857 537h2v1h-2zM861 537h1v1h-1zM865 537h2v1h-2zM869 537h1v1h-1zM871 537h1v1h-1zM874 537h6v1h-6zM883 537h2v1h-2zM891 537h9v1h-9zM901 537h1v1h-1zM904 537h3v1h-3zM772 538h6v1h-6zM779 538h7v1h-7zM787 538h7v1h-7zM795 538h1v1h-1zM797 538h2v1h-2zM802 538h2v1h-2zM805 538h15v1h-15zM822 538h1v1h-1zM824 538h5v1h-5zM830 538h5v1h-5zM837 538h1v1h-1zM841 538h1v1h-1zM843 538h1v1h-1zM845 538h3v1h-3zM849 538h3v1h-3zM856 538h4v1h-4zM861 538h1v1h-1zM865 538h1v1h-1zM869 538h3v1h-3zM876 538h2v1h-2zM883 538h2v1h-2zM893 538h1v1h-1zM896 538h7v1h-7zM904 538h1v1h-1zM906 538h1v1h-1zM772 539h3v1h-3zM779 539h7v1h-7zM787 539h2v1h-2zM792 539h4v1h-4zM797 539h1v1h-1zM801 539h3v1h-3zM806 539h3v1h-3zM810 539h3v1h-3zM814 539h4v1h-4zM824 539h3v1h-3zM831 539h2v1h-2zM837 539h1v1h-1zM846 539h1v1h-1zM850 539h1v1h-1zM856 539h3v1h-3zM861 539h1v1h-1zM865 539h1v1h-1zM870 539h1v1h-1zM873 539h8v1h-8zM884 539h1v1h-1zM893 539h1v1h-1zM896 539h5v1h-5zM902 539h5v1h-5zM785 540h1v1h-1zM802 540h1v1h-1zM883 540h1v1h-1z"/>
<path fill="#ffff00" d="M779 547h7v1h-7zM789 547h1v1h-1zM791 547h4v1h-4zM798 547h1v1h-1zM800 547h1v1h-1zM873 547h4v1h-4zM879 547h2v1h-2zM896 547h1v1h-1zM899 547h4v1h-4zM779 548h8v1h-8zM788 548h2v1h-2zM791 548h5v1h-5zM798 548h3v1h-3zM873 548h8v1h-8zM896 548h1v1h-1zM898 548h5v1h-5zM772 549h4v1h-4zM779 549h8v1h-8zM788 549h8v1h-8zM797 549h7v1h-7zM806 549h3v1h-3zM810 549h4v1h-4zM819 549h2v1h-2zM823 549h6v1h-6zM831 549h1v1h-1zM834 549h2v1h-2zM838 549h5v1h-5zM846 549h4v1h-4zM851 549h3v1h-3zM861 549h2v1h-2zM868 549h4v1h-4zM873 549h8v1h-8zM891 549h3v1h-3zM895 549h8v1h-8zM772 550h1v1h-1zM774 550h2v1h-2zM779 550h7v1h-7zM788 550h8v1h-8zM797 550h8v1h-8zM806 550h1v1h-1zM808 550h4v1h-4zM819 550h2v1h-2zM823 550h1v1h-1zM827 550h3v1h-3zM831 550h1v1h-1zM834 550h3v1h-3zM840 550h1v1h-1zM846 550h1v1h-1zM849 550h1v1h-1zM851 550h1v1h-1zM853 550h2v1h-2zM861 550h2v1h-2zM870 550h11v1h-11zM891 550h1v1h-1zM893 550h1v1h-1zM895 550h8v1h-8zM774 551h2v1h-2zM779 551h6v1h-6zM788 551h2v1h-2zM791 551h5v1h-5zM799 551h2v1h-2zM803 551h2v1h-2zM806 551h1v1h-1zM808 551h1v1h-1zM810 551h3v1h-3zM814 551h2v1h-2zM817 551h1v1h-1zM820 551h1v1h-1zM823 551h3v1h-3zM827 551h3v1h-3zM831 551h1v1h-1zM834 551h3v1h-3zM840 551h1v1h-1zM846 551h1v1h-1zM849 551h3v1h-3zM853 551h6v1h-6zM860 551h3v1h-3zM864 551h1v1h-1zM866 551h1v1h-1zM870 551h1v1h-1zM873 551h4v1h-4zM878 551h3v1h-3zM893 551h1v1h-1zM896 551h7v1h-7zM773 552h2v1h-2zM779 552h7v1h-7zM788 552h2v1h-2zM791 552h5v1h-5zM799 552h3v1h-3zM803 552h2v1h-2zM806 552h3v1h-3zM810 552h4v1h-4zM815 552h3v1h-3zM820 552h1v1h-1zM823 552h7v1h-7zM831 552h1v1h-1zM834 552h1v1h-1zM836 552h1v1h-1zM840 552h1v1h-1zM846 552h4v1h-4zM851 552h3v1h-3zM856 552h2v1h-2zM860 552h1v1h-1zM862 552h1v1h-1zM864 552h3v1h-3zM870 552h1v1h-1zM872 552h2v1h-2zM875 552h2v1h-2zM878 552h2v1h-2zM892 552h2v1h-2zM895 552h8v1h-8zM774 553h2v1h-2zM779 553h7v1h-7zM788 553h8v1h-8zM799 553h6v1h-6zM806 553h1v1h-1zM808 553h2v1h-2zM813 553h1v1h-1zM815 553h2v1h-2zM820 553h1v1h-1zM825 553h7v1h-7zM833 553h4v1h-4zM840 553h1v1h-1zM843 553h2v1h-2zM846 553h4v1h-4zM851 553h1v1h-1zM853 553h2v1h-2zM856 553h2v1h-2zM859 553h4v1h-4zM865 553h2v1h-2zM869 553h2v1h-2zM876 553h4v1h-4zM891 553h2v1h-2zM895 553h8v1h-8zM772 554h1v1h-1zM775 554h1v1h-1zM779 554h8v1h-8zM788 554h1v1h-1zM791 554h5v1h-5zM798 554h2v1h-2zM803 554h2v1h-2zM806 554h1v1h-1zM808 554h3v1h-3zM813 554h1v1h-1zM815 554h3v1h-3zM820 554h1v1h-1zM823 554h1v1h-1zM825 554h4v1h-4zM830 554h2v1h-2zM833 554h5v1h-5zM840 554h1v1h-1zM844 554h1v1h-1zM846 554h1v1h-1zM851 554h1v1h-1zM853 554h2v1h-2zM856 554h2v1h-2zM859 554h8v1h-8zM869 554h1v1h-1zM873 554h7v1h-7zM883 554h2v1h-2zM891 554h1v1h-1zM895 554h2v1h-2zM898 554h5v1h-5zM904 554h3v1h-3zM772 555h6v1h-6zM779 555h5v1h-5zM786 555h1v1h-1zM788 555h8v1h-8zM798 555h2v1h-2zM803 555h2v1h-2zM806 555h10v1h-10zM817 555h1v1h-1zM819 555h3v1h-3zM823 555h6v1h-6zM830 555h2v1h-2zM833 555h1v1h-1zM836 555h2v1h-2zM840 555h1v1h-1zM846 555h1v1h-1zM851 555h8v1h-8zM862 555h1v1h-1zM864 555h1v1h-1zM866 555h1v1h-1zM869 555h1v1h-1zM876 555h2v1h-2zM883 555h2v1h-2zM890 555h4v1h-4zM896 555h1v1h-1zM898 555h5v1h-5zM904 555h1v1h-1zM906 555h1v1h-1zM773 556h2v1h-2zM777 556h3v1h-3zM783 556h4v1h-4zM788 556h1v1h-1zM793 556h3v1h-3zM797 556h2v1h-2zM801 556h3v1h-3zM807 556h2v1h-2zM811 556h2v1h-2zM814 556h1v1h-1zM817 556h1v1h-1zM819 556h3v1h-3zM824 556h2v1h-2zM831 556h1v1h-1zM833 556h1v1h-1zM837 556h1v1h-1zM840 556h1v1h-1zM846 556h1v1h-1zM852 556h2v1h-2zM855 556h1v1h-1zM858 556h1v1h-1zM862 556h1v1h-1zM864 556h1v1h-1zM867 556h1v1h-1zM869 556h1v1h-1zM872 556h9v1h-9zM883 556h2v1h-2zM891 556h3v1h-3zM896 556h1v1h-1zM898 556h3v1h-3zM902 556h1v1h-1zM904 556h3v1h-3zM794 557h1v1h-1zM802 557h1v1h-1zM883 557h1v1h-1zM896 557h1v1h-1zM905 557h1v1h-1z"/>
<path fill="#ffff00" d="M780 565h1v1h-1zM784 565h1v1h-1zM789 565h1v1h-1zM791 565h2v1h-2zM798 565h2v1h-2zM780 566h2v1h-2zM783 566h2v1h-2zM788 566h2v1h-2zM791 566h2v1h-2zM797 566h3v1h-3zM774 567h1v1h-1zM779 567h7v1h-7zM788 567h7v1h-7zM797 567h3v1h-3zM773 568h2v1h-2zM779 568h4v1h-4zM784 568h2v1h-2zM787 568h2v1h-2zM790 568h4v1h-4zM796 568h7v1h-7zM773 569h2v1h-2zM779 569h7v1h-7zM787 569h2v1h-2zM790 569h1v1h-1zM793 569h1v1h-1zM798 569h2v1h-2zM802 569h1v1h-1zM804 569h6v1h-6zM811 569h5v1h-5zM773 570h2v1h-2zM779 570h4v1h-4zM784 570h2v1h-2zM787 570h2v1h-2zM790 570h2v1h-2zM793 570h1v1h-1zM798 570h2v1h-2zM802 570h1v1h-1zM804 570h6v1h-6zM811 570h1v1h-1zM813 570h4v1h-4zM772 571h1v1h-1zM774 571h1v1h-1zM779 571h7v1h-7zM788 571h1v1h-1zM790 571h2v1h-2zM793 571h1v1h-1zM798 571h3v1h-3zM802 571h1v1h-1zM804 571h4v1h-4zM809 571h1v1h-1zM811 571h1v1h-1zM813 571h1v1h-1zM815 571h2v1h-2zM772 572h4v1h-4zM781 572h2v1h-2zM788 572h1v1h-1zM790 572h2v1h-2zM793 572h1v1h-1zM797 572h2v1h-2zM800 572h1v1h-1zM802 572h1v1h-1zM804 572h4v1h-4zM809 572h1v1h-1zM811 572h1v1h-1zM813 572h1v1h-1zM815 572h2v1h-2zM818 572h2v1h-2zM772 573h14v1h-14zM788 573h1v1h-1zM791 573h3v1h-3zM797 573h2v1h-2zM802 573h1v1h-1zM804 573h4v1h-4zM809 573h1v1h-1zM811 573h1v1h-1zM813 573h1v1h-1zM815 573h3v1h-3zM819 573h1v1h-1zM774 574h1v1h-1zM776 574h2v1h-2zM781 574h2v1h-2zM788 574h7v1h-7zM796 574h2v1h-2zM800 574h3v1h-3zM804 574h4v1h-4zM809 574h1v1h-1zM811 574h1v1h-1zM813 574h1v1h-1zM815 574h3v1h-3zM819 574h1v1h-1zM782 575h1v1h-1zM788 575h7v1h-7zM796 575h1v1h-1zM800 575h3v1h-3zM818 575h2v1h-2z"/>
<path fill="#ffff00" d="M779 582h1v1h-1zM782 582h4v1h-4zM787 582h2v1h-2zM790 582h4v1h-4zM796 582h7v1h-7zM805 582h1v1h-1zM807 582h1v1h-1zM779 583h7v1h-7zM787 583h8v1h-8zM796 583h8v1h-8zM805 583h3v1h-3zM772 584h4v1h-4zM778 584h5v1h-5zM784 584h2v1h-2zM788 584h1v1h-1zM793 584h2v1h-2zM796 584h1v1h-1zM798 584h3v1h-3zM806 584h2v1h-2zM813 584h3v1h-3zM817 584h3v1h-3zM822 584h2v1h-2zM772 585h3v1h-3zM778 585h8v1h-8zM787 585h1v1h-1zM789 585h3v1h-3zM793 585h2v1h-2zM796 585h7v1h-7zM804 585h8v1h-8zM813 585h3v1h-3zM817 585h3v1h-3zM821 585h3v1h-3zM772 586h1v1h-1zM779 586h7v1h-7zM787 586h1v1h-1zM789 586h6v1h-6zM796 586h7v1h-7zM805 586h7v1h-7zM813 586h1v1h-1zM815 586h1v1h-1zM817 586h1v1h-1zM819 586h3v1h-3zM823 586h5v1h-5zM829 586h2v1h-2zM832 586h5v1h-5zM772 587h3v1h-3zM779 587h7v1h-7zM787 587h1v1h-1zM789 587h1v1h-1zM791 587h4v1h-4zM797 587h1v1h-1zM799 587h2v1h-2zM802 587h1v1h-1zM807 587h1v1h-1zM810 587h2v1h-2zM814 587h2v1h-2zM817 587h1v1h-1zM819 587h3v1h-3zM823 587h8v1h-8zM832 587h6v1h-6zM772 588h4v1h-4zM778 588h8v1h-8zM787 588h1v1h-1zM789 588h6v1h-6zM796 588h5v1h-5zM802 588h1v1h-1zM806 588h6v1h-6zM814 588h2v1h-2zM817 588h1v1h-1zM819 588h3v1h-3zM823 588h6v1h-6zM830 588h1v1h-1zM832 588h1v1h-1zM834 588h1v1h-1zM836 588h2v1h-2zM774 589h2v1h-2zM778 589h8v1h-8zM787 589h1v1h-1zM789 589h1v1h-1zM791 589h4v1h-4zM796 589h7v1h-7zM806 589h6v1h-6zM815 589h1v1h-1zM817 589h1v1h-1zM819 589h3v1h-3zM823 589h6v1h-6zM830 589h1v1h-1zM832 589h1v1h-1zM834 589h1v1h-1zM836 589h2v1h-2zM772 590h1v1h-1zM774 590h2v1h-2zM779 590h7v1h-7zM787 590h1v1h-1zM789 590h6v1h-6zM796 590h2v1h-2zM799 590h4v1h-4zM806 590h1v1h-1zM809 590h3v1h-3zM813 590h1v1h-1zM815 590h3v1h-3zM819 590h1v1h-1zM821 590h1v1h-1zM823 590h6v1h-6zM830 590h1v1h-1zM832 590h1v1h-1zM834 590h1v1h-1zM836 590h5v1h-5zM772 591h6v1h-6zM779 591h4v1h-4zM784 591h2v1h-2zM787 591h1v1h-1zM789 591h6v1h-6zM796 591h5v1h-5zM805 591h2v1h-2zM810 591h2v1h-2zM813 591h3v1h-3zM817 591h3v1h-3zM821 591h3v1h-3zM825 591h4v1h-4zM830 591h1v1h-1zM832 591h1v1h-1zM834 591h1v1h-1zM836 591h3v1h-3zM840 591h1v1h-1zM772 592h3v1h-3zM776 592h1v1h-1zM779 592h4v1h-4zM784 592h2v1h-2zM787 592h1v1h-1zM793 592h13v1h-13zM809 592h3v1h-3zM813 592h3v1h-3zM818 592h2v1h-2zM822 592h2v1h-2zM825 592h1v1h-1zM827 592h2v1h-2zM830 592h1v1h-1zM832 592h1v1h-1zM834 592h1v1h-1zM836 592h3v1h-3zM840 592h1v1h-1zM779 593h1v1h-1zM781 593h2v1h-2zM784 593h2v1h-2zM787 593h1v1h-1zM793 593h2v1h-2zM799 593h4v1h-4zM805 593h1v1h-1zM809 593h2v1h-2zM839 593h1v1h-1z"/>
<path fill="#00ff00" d="M817 707h4v1h-4zM822 707h4v1h-4zM817 708h2v1h-2zM822 708h1v1h-1zM825 708h1v1h-1zM817 709h9v1h-9zM817 710h4v1h-4zM822 710h4v1h-4zM817 711h7v1h-7zM825 711h1v1h-1zM817 712h4v1h-4zM822 712h4v1h-4z"/>
<path fill="#00ff00" d="M829 707h1v1h-1zM831 707h1v1h-1zM833 707h4v1h-4zM828 708h4v1h-4zM833 708h5v1h-5zM828 709h10v1h-10zM828 710h10v1h-10zM829 711h3v1h-3zM833 711h5v1h-5zM828 712h10v1h-10z"/>
<path fill="#00ff00" d="M845 707h3v1h-3zM849 707h4v1h-4zM844 708h2v1h-2zM847 708h1v1h-1zM849 708h4v1h-4zM844 709h8v1h-8zM845 710h1v1h-1zM847 710h1v1h-1zM849 710h3v1h-3zM845 711h1v1h-1zM847 711h1v1h-1zM849 711h2v1h-2zM852 711h1v1h-1zM844 712h1v1h-1zM846 712h2v1h-2zM849 712h4v1h-4z"/>
<path fill="#00ff00" d="M859 707h6v1h-6zM868 707h1v1h-1zM870 707h3v1h-3zM874 707h3v1h-3zM859 708h3v1h-3zM863 708h10v1h-10zM874 708h3v1h-3zM859 709h7v1h-7zM867 709h2v1h-2zM870 709h3v1h-3zM874 709h3v1h-3zM859 710h7v1h-7zM867 710h2v1h-2zM870 710h7v1h-7zM859 711h2v1h-2zM862 711h4v1h-4zM867 711h2v1h-2zM870 711h1v1h-1zM872 711h1v1h-1zM874 711h3v1h-3zM859 712h12v1h-12zM872 712h1v1h-1zM875 712h2v1h-2z"/>
<path fill="#00ff00" d="M879 707h6v1h-6zM886 707h4v1h-4zM879 708h5v1h-5zM885 708h5v1h-5zM879 709h5v1h-5zM886 709h3v1h-3zM879 710h5v1h-5zM885 710h5v1h-5zM880 711h4v1h-4zM886 711h1v1h-1zM889 711h1v1h-1zM879 712h6v1h-6zM886 712h4v1h-4z"/>
<path fill="#00ff00" d="M894 707h3v1h-3zM900 707h4v1h-4zM906 707h4v1h-4zM893 708h4v1h-4zM900 708h4v1h-4zM906 708h2v1h-2zM909 708h1v1h-1zM893 709h4v1h-4zM900 709h4v1h-4zM906 709h4v1h-4zM893 710h3v1h-3zM900 710h4v1h-4zM906 710h4v1h-4zM893 711h6v1h-6zM900 711h1v1h-1zM903 711h1v1h-1zM906 711h4v1h-4zM895 712h1v1h-1zM898 712h2v1h-2zM902 712h2v1h-2zM906 712h4v1h-4z"/>
<path fill="#00ff00" d="M816 715h1v1h-1zM818 715h2v1h-2zM821 715h2v1h-2zM824 715h1v1h-1zM817 716h3v1h-3zM822 716h1v1h-1zM824 716h1v1h-1zM816 717h10v1h-10zM816 718h5v1h-5zM822 718h4v1h-4zM816 719h5v1h-5zM822 719h1v1h-1zM824 719h1v1h-1zM816 720h4v1h-4zM822 720h1v1h-1zM824 720h1v1h-1zM816 721h5v1h-5zM822 721h1v1h-1zM824 721h1v1h-1z"/>
<path fill="#00ff00" d="M863 715h4v1h-4zM868 715h3v1h-3zM873 715h3v1h-3zM863 716h4v1h-4zM868 716h4v1h-4zM873 716h4v1h-4zM863 717h14v1h-14zM863 718h4v1h-4zM868 718h4v1h-4zM873 718h3v1h-3zM863 719h9v1h-9zM873 719h3v1h-3zM863 720h9v1h-9zM873 720h4v1h-4zM863 721h4v1h-4zM868 721h4v1h-4zM873 721h1v1h-1zM875 721h2v1h-2z"/>
<path fill="#00ff00" d="M818 731h1v1h-1zM822 731h1v1h-1zM824 731h1v1h-1zM816 732h10v1h-10zM816 733h1v1h-1zM818 733h1v1h-1zM821 733h4v1h-4zM816 734h4v1h-4zM821 734h4v1h-4zM816 735h4v1h-4zM821 735h5v1h-5zM816 736h4v1h-4zM821 736h5v1h-5zM816 737h4v1h-4zM821 737h5v1h-5zM818 738h1v1h-1zM822 738h2v1h-2zM825 738h1v1h-1z"/>
<path fill="#00ff00" d="M822 740h4v1h-4zM816 741h10v1h-10zM818 742h1v1h-1zM822 742h3v1h-3zM818 743h1v1h-1zM822 743h3v1h-3zM818 744h1v1h-1zM822 744h2v1h-2zM816 745h4v1h-4zM822 745h1v1h-1zM825 745h1v1h-1zM816 746h5v1h-5zM822 746h4v1h-4z"/>
<path fill="#00ff00" d="M865 740h5v1h-5zM871 740h1v1h-1zM873 740h2v1h-2zM865 741h5v1h-5zM871 741h5v1h-5zM865 742h5v1h-5zM871 742h5v1h-5zM865 743h5v1h-5zM871 743h5v1h-5zM865 744h5v1h-5zM871 744h5v1h-5zM865 745h11v1h-11zM865 746h11v1h-11z"/>
<path fill="#00ff00" d="M918 717h8v1h-8zM927 717h8v1h-8zM918 718h11v1h-11zM931 718h1v1h-1zM934 718h1v1h-1zM918 719h8v1h-8zM927 719h8v1h-8zM918 720h17v1h-17zM918 721h15v1h-15zM934 721h1v1h-1zM918 722h8v1h-8zM927 722h3v1h-3zM931 722h4v1h-4z"/>
<path fill="#00ff00" d="M945 717h4v1h-4zM950 717h4v1h-4zM945 718h4v1h-4zM950 718h4v1h-4zM945 719h4v1h-4zM950 719h4v1h-4zM945 720h4v1h-4zM950 720h4v1h-4zM945 721h4v1h-4zM950 721h4v1h-4zM945 722h9v1h-9z"/>
<path fill="#00ff00" d="M958 717h1v1h-1zM960 717h1v1h-1zM964 717h4v1h-4zM958 718h1v1h-1zM960 718h8v1h-8zM958 719h4v1h-4zM963 719h5v1h-5zM958 720h1v1h-1zM960 720h1v1h-1zM963 720h5v1h-5zM958 721h3v1h-3zM962 721h4v1h-4zM967 721h1v1h-1zM958 722h10v1h-10z"/>
<path fill="#00ff00" d="M959 729h2v1h-2zM962 729h2v1h-2zM965 729h4v1h-4zM959 730h10v1h-10zM959 731h3v1h-3zM963 731h6v1h-6zM959 732h2v1h-2zM963 732h6v1h-6zM959 733h2v1h-2zM962 733h2v1h-2zM965 733h4v1h-4zM959 734h10v1h-10z"/>
<path fill="#00ff00" d="M915 739h1v1h-1zM917 739h1v1h-1zM914 740h5v1h-5zM915 741h1v1h-1zM917 741h1v1h-1zM914 742h5v1h-5zM915 743h1v1h-1zM917 743h1v1h-1zM914 744h2v1h-2zM918 744h1v1h-1z"/>
<path fill="#00ff00" d="M931 739h3v1h-3zM935 739h1v1h-1zM931 740h4v1h-4zM931 741h5v1h-5zM931 742h4v1h-4zM932 743h4v1h-4zM931 744h5v1h-5z"/>
<path fill="#00ff00" d="M946 739h5v1h-5zM946 740h5v1h-5zM946 741h5v1h-5zM946 742h5v1h-5zM946 743h5v1h-5zM946 744h5v1h-5z"/>
<path fill="#00ff00" d="M962 739h3v1h-3zM966 739h1v1h-1zM962 740h4v1h-4zM962 741h5v1h-5zM962 742h4v1h-4zM963 743h4v1h-4zM962 744h5v1h-5z"/>
<path fill="#00ff00" d="M980 707h3v1h-3zM984 707h1v1h-1zM987 707h1v1h-1zM989 707h1v1h-1zM992 707h1v1h-1zM994 707h3v1h-3zM1000 707h2v1h-2zM1005 707h4v1h-4zM1010 707h1v1h-1zM1013 707h1v1h-1zM1016 707h5v1h-5zM980 708h5v1h-5zM987 708h1v1h-1zM989 708h1v1h-1zM992 708h1v1h-1zM994 708h3v1h-3zM998 708h4v1h-4zM1004 708h4v1h-4zM1010 708h1v1h-1zM1012 708h3v1h-3zM1016 708h5v1h-5zM980 709h5v1h-5zM986 709h11v1h-11zM998 709h2v1h-2zM1001 709h1v1h-1zM1005 709h3v1h-3zM1010 709h5v1h-5zM1016 709h5v1h-5zM980 710h5v1h-5zM987 710h1v1h-1zM989 710h1v1h-1zM992 710h1v1h-1zM994 710h3v1h-3zM999 710h1v1h-1zM1001 710h1v1h-1zM1004 710h4v1h-4zM1010 710h5v1h-5zM1016 710h5v1h-5zM980 711h5v1h-5zM987 711h1v1h-1zM989 711h1v1h-1zM992 711h11v1h-11zM1005 711h4v1h-4zM1010 711h5v1h-5zM1016 711h5v1h-5zM980 712h13v1h-13zM994 712h2v1h-2zM999 712h1v1h-1zM1001 712h1v1h-1zM1004 712h5v1h-5zM1010 712h4v1h-4zM1016 712h5v1h-5zM980 713h5v1h-5zM987 713h1v1h-1zM989 713h1v1h-1zM992 713h1v1h-1zM994 713h3v1h-3zM999 713h1v1h-1zM1001 713h1v1h-1zM1004 713h4v1h-4zM1011 713h4v1h-4zM1016 713h5v1h-5zM980 714h5v1h-5zM986 714h2v1h-2zM989 714h1v1h-1zM992 714h4v1h-4zM998 714h1v1h-1zM1001 714h1v1h-1zM1004 714h1v1h-1zM1006 714h1v1h-1zM1008 714h1v1h-1zM1010 714h11v1h-11zM980 715h5v1h-5zM986 715h1v1h-1zM989 715h1v1h-1zM992 715h2v1h-2zM995 715h2v1h-2zM998 715h1v1h-1zM1001 715h1v1h-1zM1005 715h2v1h-2zM1011 715h2v1h-2zM1014 715h1v1h-1zM1016 715h5v1h-5z"/>
<path fill="#00ff00" d="M42 671h3v1h-3zM42 672h3v1h-3zM42 673h3v1h-3zM42 674h3v1h-3z"/>
<path fill="#00ff00" d="M48 671h7v1h-7zM48 672h7v1h-7zM49 673h6v1h-6zM48 674h7v1h-7z"/>
<path fill="#00ff00" d="M57 671h4v1h-4zM57 672h4v1h-4zM57 673h4v1h-4zM57 674h1v1h-1zM59 674h2v1h-2z"/>
<path fill="#00ff00" d="M41 677h3v1h-3zM41 678h4v1h-4zM41 679h4v1h-4zM41 680h1v1h-1zM43 680h1v1h-1z"/>
<path fill="#00ff00" d="M48 677h5v1h-5zM48 678h5v1h-5zM49 679h3v1h-3zM48 680h5v1h-5z"/>
<path fill="#00ff00" d="M56 677h5v1h-5zM56 678h5v1h-5zM56 679h3v1h-3zM60 679h1v1h-1zM56 680h5v1h-5z"/>
<path fill="#00ff00" d="M43 688h9v1h-9zM53 688h5v1h-5zM43 689h1v1h-1zM45 689h13v1h-13zM43 690h15v1h-15zM43 691h1v1h-1zM45 691h13v1h-13zM43 692h12v1h-12zM56 692h2v1h-2z"/>
<path fill="#00ff00" d="M42 700h3v1h-3zM47 700h3v1h-3zM53 700h2v1h-2zM57 700h3v1h-3zM42 701h3v1h-3zM47 701h3v1h-3zM52 701h3v1h-3zM57 701h3v1h-3zM42 702h3v1h-3zM47 702h3v1h-3zM52 702h3v1h-3zM57 702h3v1h-3zM42 703h3v1h-3zM47 703h3v1h-3zM52 703h3v1h-3zM57 703h3v1h-3zM42 704h3v1h-3zM47 704h3v1h-3zM52 704h3v1h-3zM58 704h2v1h-2z"/>
<path fill="#00ff00" d="M44 712h4v1h-4zM44 713h4v1h-4zM44 714h4v1h-4zM44 715h4v1h-4zM44 716h4v1h-4z"/>
<path fill="#00ff00" d="M53 712h5v1h-5zM53 713h5v1h-5zM54 714h3v1h-3zM53 715h5v1h-5zM54 716h2v1h-2z"/>
<path fill="#00ff00" d="M44 724h4v1h-4zM44 725h1v1h-1zM47 725h1v1h-1zM44 726h4v1h-4zM44 727h1v1h-1zM47 727h1v1h-1zM44 728h4v1h-4z"/>
<path fill="#00ff00" d="M53 724h5v1h-5zM53 725h5v1h-5zM53 726h5v1h-5zM53 727h5v1h-5zM53 728h5v1h-5z"/>
<path fill="#00ff00" d="M39 736h4v1h-4zM44 736h4v1h-4zM39 737h4v1h-4zM44 737h4v1h-4zM39 738h4v1h-4zM45 738h2v1h-2zM40 739h3v1h-3zM44 739h4v1h-4zM39 740h4v1h-4zM45 740h1v1h-1z"/>
<path fill="#00ff00" d="M54 736h3v1h-3zM58 736h4v1h-4zM54 737h1v1h-1zM56 737h1v1h-1zM58 737h4v1h-4zM54 738h3v1h-3zM58 738h4v1h-4zM54 739h1v1h-1zM56 739h1v1h-1zM58 739h4v1h-4zM54 740h3v1h-3zM58 740h4v1h-4z"/>
</svg>
</body></html>
